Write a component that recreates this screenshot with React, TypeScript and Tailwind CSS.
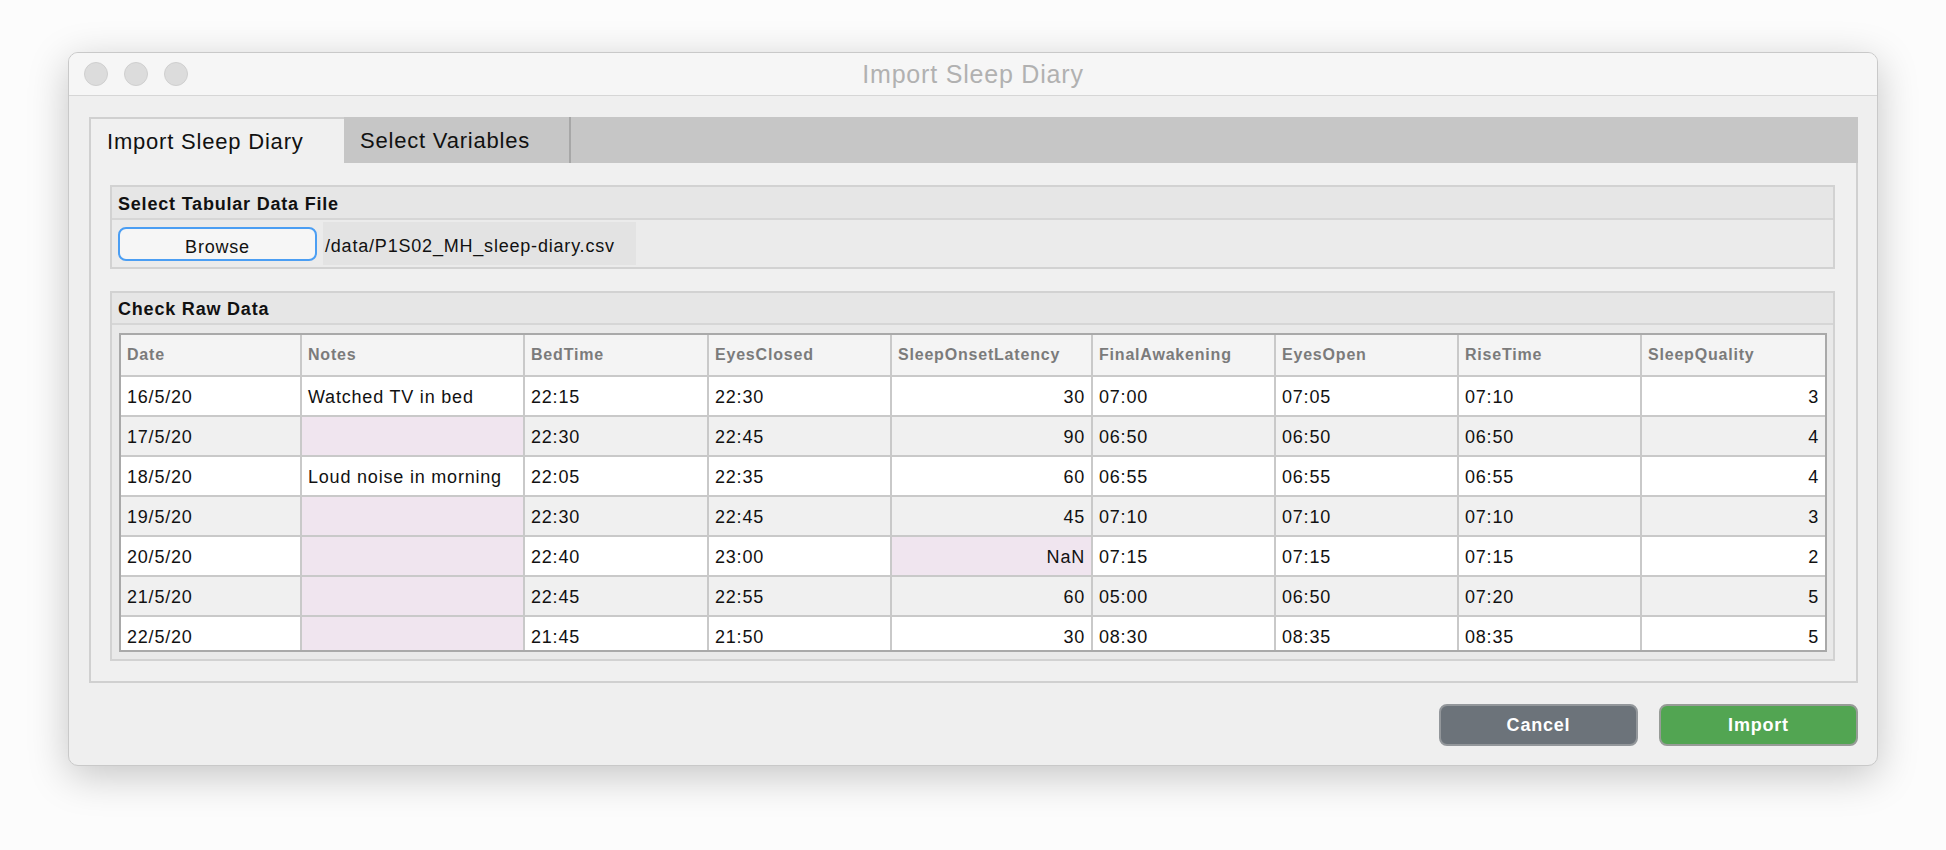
import React from "react";

type Row = {
  date: string;
  notes: string;
  bed: string;
  closed: string;
  sol: string;
  final: string;
  open: string;
  rise: string;
  quality: string;
};

const rows: Row[] = [
  { date: "16/5/20", notes: "Watched TV in bed", bed: "22:15", closed: "22:30", sol: "30", final: "07:00", open: "07:05", rise: "07:10", quality: "3" },
  { date: "17/5/20", notes: "", bed: "22:30", closed: "22:45", sol: "90", final: "06:50", open: "06:50", rise: "06:50", quality: "4" },
  { date: "18/5/20", notes: "Loud noise in morning", bed: "22:05", closed: "22:35", sol: "60", final: "06:55", open: "06:55", rise: "06:55", quality: "4" },
  { date: "19/5/20", notes: "", bed: "22:30", closed: "22:45", sol: "45", final: "07:10", open: "07:10", rise: "07:10", quality: "3" },
  { date: "20/5/20", notes: "", bed: "22:40", closed: "23:00", sol: "NaN", final: "07:15", open: "07:15", rise: "07:15", quality: "2" },
  { date: "21/5/20", notes: "", bed: "22:45", closed: "22:55", sol: "60", final: "05:00", open: "06:50", rise: "07:20", quality: "5" },
  { date: "22/5/20", notes: "", bed: "21:45", closed: "21:50", sol: "30", final: "08:30", open: "08:35", rise: "08:35", quality: "5" },
];

const headers = [
  "Date",
  "Notes",
  "BedTime",
  "EyesClosed",
  "SleepOnsetLatency",
  "FinalAwakening",
  "EyesOpen",
  "RiseTime",
  "SleepQuality",
];

const gridCols =
  "grid grid-cols-[181px_223px_184px_183px_201px_183px_183px_183px_183px]";

function Cell({
  children,
  right,
  missing,
  last,
  bg,
}: {
  children?: React.ReactNode;
  right?: boolean;
  missing?: boolean;
  last?: boolean;
  bg: string;
}) {
  return (
    <div
      className={`h-[40px] flex items-center px-[6px] pt-[2px] border-b-2 border-[#c9c9c9] text-[18px] text-[#111] whitespace-nowrap overflow-hidden ${
        last ? "" : "border-r-2"
      } ${right ? "justify-end" : "justify-start"} ${missing ? "bg-[#f0e5ef]" : bg}`}
    >
      {children}
    </div>
  );
}

function DataTable() {
  return (
    <div className="w-[1708px] h-[319px] border-2 border-[#a9a9a9] overflow-hidden bg-white">
      <div className={`${gridCols} bg-[#f4f4f4]`}>
        {headers.map((h, i) => (
          <div
            key={h}
            className={`h-[42px] flex items-center px-[6px] border-b-2 border-[#c9c9c9] text-[16px] font-bold text-[#7b7b7b] ${
              i === headers.length - 1 ? "" : "border-r-2"
            }`}
          >
            {h}
          </div>
        ))}
      </div>
      {rows.map((r, idx) => {
        const bg = idx % 2 === 0 ? "bg-white" : "bg-[#f0f0f0]";
        return (
          <div key={r.date} className={gridCols}>
            <Cell bg={bg}>{r.date}</Cell>
            <Cell bg={bg} missing={r.notes === ""}>{r.notes}</Cell>
            <Cell bg={bg}>{r.bed}</Cell>
            <Cell bg={bg}>{r.closed}</Cell>
            <Cell bg={bg} right missing={r.sol === "NaN"}>{r.sol}</Cell>
            <Cell bg={bg}>{r.final}</Cell>
            <Cell bg={bg}>{r.open}</Cell>
            <Cell bg={bg}>{r.rise}</Cell>
            <Cell bg={bg} right last>{r.quality}</Cell>
          </div>
        );
      })}
    </div>
  );
}

export default function App() {
  return (
    <div
      className="w-[1946px] h-[850px] bg-[#fcfcfc] pt-[52px] pl-[68px] tracking-[0.8px]"
      style={{ fontFamily: '"Liberation Sans", Arial, sans-serif' }}
    >
      <div className="w-[1810px] h-[714px] rounded-[10px] border border-[#c9c9c9] bg-[#efefef] shadow-[0_10px_40px_rgba(0,0,0,0.22)] overflow-hidden flex flex-col">
        {/* title bar */}
        <div className="h-[43px] shrink-0 bg-[#f6f6f6] border-b border-[#d6d6d6] grid grid-cols-[1fr_auto_1fr] items-center px-[15px]">
          <div className="flex gap-[16px]">
            <span className="w-[24px] h-[24px] rounded-full bg-[#dcdcdc] border border-[#cfcfcf]" />
            <span className="w-[24px] h-[24px] rounded-full bg-[#dcdcdc] border border-[#cfcfcf]" />
            <span className="w-[24px] h-[24px] rounded-full bg-[#dcdcdc] border border-[#cfcfcf]" />
          </div>
          <div className="text-[25px] text-[#b1b1b1] pt-[2px]">Import Sleep Diary</div>
          <div />
        </div>

        <div className="flex-1 px-[20px] pt-[21px] pb-[19px] flex flex-col">
          {/* tab panel */}
          <div className="w-[1769px] h-[566px] flex flex-col">
            <div className="h-[46px] shrink-0 flex bg-[#c6c6c6]">
              <div className="w-[255px] h-full bg-[#f0f0f0] border-l-2 border-t-2 border-[#d0d0d0] flex items-center pl-[16px] text-[22px] text-[#111]">
                Import Sleep Diary
              </div>
              <div className="w-[227px] h-full border-r-2 border-[#a7a7a7] flex items-center pl-[16px] text-[22px] text-[#111]">
                Select Variables
              </div>
            </div>
            <div className="flex-1 bg-[#f0f0f0] border-2 border-t-0 border-[#d0d0d0] pt-[22px] pl-[19px] flex flex-col gap-[22px]">
              {/* file section */}
              <div className="w-[1725px] h-[84px] border-2 border-[#d2d2d2] bg-[#ebebeb] flex flex-col">
                <div className="h-[33px] shrink-0 bg-[#e6e6e6] border-b-2 border-[#d6d6d6] flex items-center pl-[6px] pt-[3px] text-[18px] font-bold text-[#111]">
                  Select Tabular Data File
                </div>
                <div className="flex-1 flex items-center pl-[6px]">
                  <button className="w-[199px] h-[34px] rounded-[8px] border-2 border-[#4b9ef3] bg-[#f6f6f6] text-[18px] text-[#111] pt-[6px] leading-none">
                    Browse
                  </button>
                  <div className="ml-[6px] w-[313px] h-[43px] bg-[#e3e3e3] flex items-center pl-[2px] pt-[5px] text-[18px] text-[#111]">
                    /data/P1S02_MH_sleep-diary.csv
                  </div>
                </div>
              </div>

              {/* raw data section */}
              <div className="w-[1725px] h-[370px] border-2 border-[#d2d2d2] bg-[#e9e9e9] flex flex-col">
                <div className="h-[32px] shrink-0 bg-[#e6e6e6] border-b-2 border-[#d6d6d6] flex items-center pl-[6px] pt-[3px] text-[18px] font-bold text-[#111]">
                  Check Raw Data
                </div>
                <div className="pt-[8px] pl-[7px]">
                  <DataTable />
                </div>
              </div>
            </div>
          </div>

          {/* footer buttons */}
          <div className="w-[1769px] mt-[21px] flex justify-end gap-[21px]">
            <button className="w-[199px] h-[42px] rounded-[8px] border-2 border-[#93979b] bg-[#6c737a] text-white text-[18px] font-bold">
              Cancel
            </button>
            <button className="w-[199px] h-[42px] rounded-[8px] border-2 border-[#979c97] bg-[#52a552] text-white text-[18px] font-bold">
              Import
            </button>
          </div>
        </div>
      </div>
    </div>
  );
}
